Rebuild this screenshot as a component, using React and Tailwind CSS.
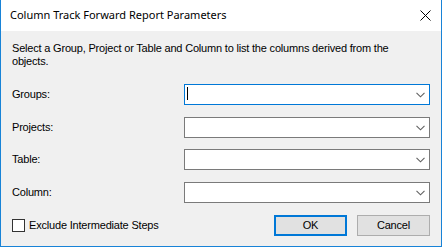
import React from "react";

function Chevron() {
  return (
    <svg width="9" height="6" viewBox="0 0 9 6" className="block">
      <polyline points="0.5,0.8 4.5,4.8 8.5,0.8" fill="none" stroke="#606060" strokeWidth="1.1" />
    </svg>
  );
}

function Combo({ focused }) {
  return (
    <div
      className={
        "w-[246px] h-[21px] bg-white border flex items-center justify-end pr-[4px] relative " +
        (focused ? "border-[#0078d7]" : "border-[#7a7a7a]")
      }
    >
      {focused && <div className="absolute left-[2px] top-[2px] w-px h-[13px] bg-black" />}
      <Chevron />
    </div>
  );
}

function Row({ label, focused, top }) {
  return (
    <div className={"flex items-center justify-between h-[21px] " + top}>
      <span>{label}</span>
      <Combo focused={focused} />
    </div>
  );
}

export default function App() {
  return (
    <div
      className="w-[442px] h-[247px] flex flex-col border-l border-r border-b border-[#1883d7] bg-[#f0f0f0] text-black"
      style={{ fontFamily: '"Liberation Sans", Arial, sans-serif' }}
    >
      <div className="h-[31px] bg-white flex items-center justify-between pl-[9px] pr-[9px] shrink-0">
        <span className="text-[11px] text-black" style={{ fontFamily: '"Noto Sans", "Open Sans", sans-serif' }}>
          Column Track Forward Report Parameters
        </span>
        <svg width="11" height="11" viewBox="0 0 11 11" className="mr-[1px]">
          <path d="M0.5 0.5 L10.5 10.5 M10.5 0.5 L0.5 10.5" stroke="#000" strokeWidth="1" />
        </svg>
      </div>
      <div className="flex-1 flex flex-col px-[11px] text-[11px] leading-[13px] tracking-[-0.19px]">
        <p className="mt-[11px] pr-[30px]">
          Select a Group, Project or Table and Column to list the columns derived from the objects.
        </p>
        <Row label="Groups:" focused top="mt-[16px]" />
        <Row label="Projects:" top="mt-[12px]" />
        <Row label="Table:" top="mt-[11px]" />
        <Row label="Column:" top="mt-[12px]" />
        <div className="flex items-center justify-between mt-[12px] h-[21px]">
          <div className="flex items-center">
            <div className="w-[13px] h-[13px] border border-[#333] bg-white" />
            <span className="ml-[4px]">Exclude Intermediate Steps</span>
          </div>
          <div className="flex items-center gap-[10px]">
            <div className="w-[73px] h-[21px] border-2 border-[#0078d7] bg-[#e1e1e1] flex items-center justify-center">
              OK
            </div>
            <div className="w-[73px] h-[21px] border border-[#adadad] bg-[#e1e1e1] flex items-center justify-center">
              Cancel
            </div>
          </div>
        </div>
      </div>
    </div>
  );
}
